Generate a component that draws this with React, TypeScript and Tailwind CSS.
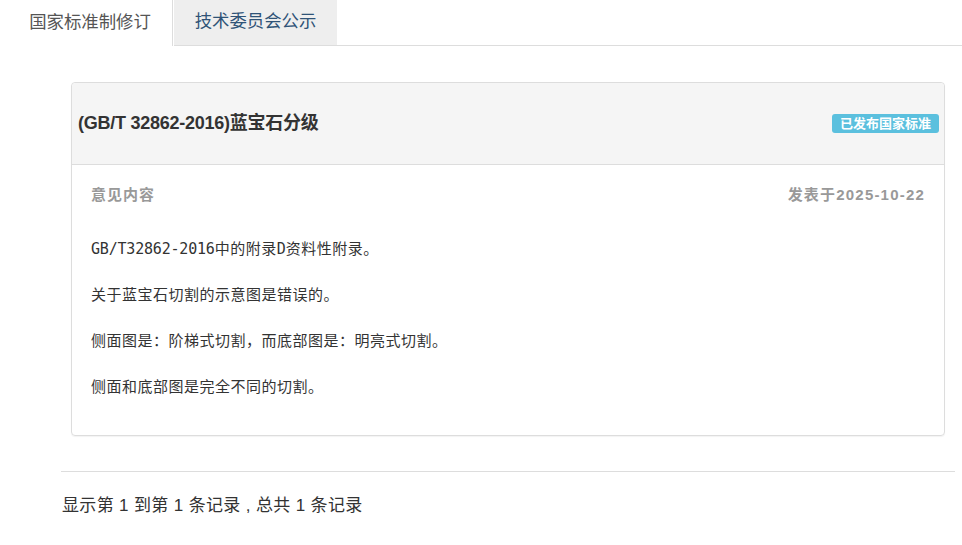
import React from "react";

const cjk = '"Liberation Sans", "Noto Sans CJK SC", sans-serif';
const mono = '"DejaVu Sans Mono", "Noto Sans CJK SC", monospace';

export default function App() {
  return (
    <div className="w-[962px] h-[545px] bg-white overflow-hidden" style={{ fontFamily: cjk }}>
      {/* Tabs */}
      <div className="flex h-[46px] ml-[10px]">
        <div className="w-[163px] border-r border-[#dddddd] flex items-center justify-center pb-[2px] pr-[2px] text-[17.4px] text-[#555555]">
          国家标准制修订
        </div>
        <div className="ml-[1px] w-[163px] bg-[#eeeeee] border-b border-[#dddddd] flex items-center justify-center pb-[2px] text-[17.4px] text-[#2f5377]">
          技术委员会公示
        </div>
        <div className="flex-1 border-b border-[#dddddd]" />
      </div>

      {/* Card */}
      <div className="ml-[71px] mr-[17px] mt-[36px] border border-[#dddddd] rounded-[4px] shadow-[0_1px_1px_rgba(0,0,0,0.05)]">
        <div className="h-[82px] bg-[#f5f5f5] border-b border-[#dddddd] rounded-t-[4px] flex items-center justify-between pl-[6px] pr-[5px]">
          <div className="text-[18px] font-bold text-[#333333] tracking-[-0.25px]">(GB/T 32862-2016)蓝宝石分级</div>
          <span className="bg-[#5bc0de] text-white text-[13px] font-bold leading-[19px] h-[19px] px-[8px] rounded-[3px]">
            已发布国家标准
          </span>
        </div>
        <div className="px-[19px] pt-[20px] pb-[38px]">
          <div className="flex justify-between text-[15px] font-bold text-[#999999] leading-[20px]">
            <span className="tracking-[1px]">意见内容</span>
            <span className="tracking-[1.2px]">发表于2025-10-22</span>
          </div>
          <div
            className="mt-[34px] text-[15px] text-[#333333] leading-[20px] flex flex-col gap-[26px] tracking-[0.5px]"
            style={{ fontFamily: mono }}
          >
            <p>
              <span className="tracking-[-0.2px]">GB/T32862-2016</span>中的附录<span className="tracking-normal">D</span>资料性附录。
            </p>
            <p>关于蓝宝石切割的示意图是错误的。</p>
            <p>侧面图是：阶梯式切割，而底部图是：明亮式切割。</p>
            <p>侧面和底部图是完全不同的切割。</p>
          </div>
        </div>
      </div>

      {/* Footer */}
      <div className="ml-[61px] mr-[7px] mt-[35px] border-t border-[#dddddd]" />
      <div className="ml-[62px] mt-[22px] text-[17px] text-[#333333] leading-[24px] tracking-[0.35px]">
        显示第 1 到第 1 条记录 , 总共 1 条记录
      </div>
    </div>
  );
}
